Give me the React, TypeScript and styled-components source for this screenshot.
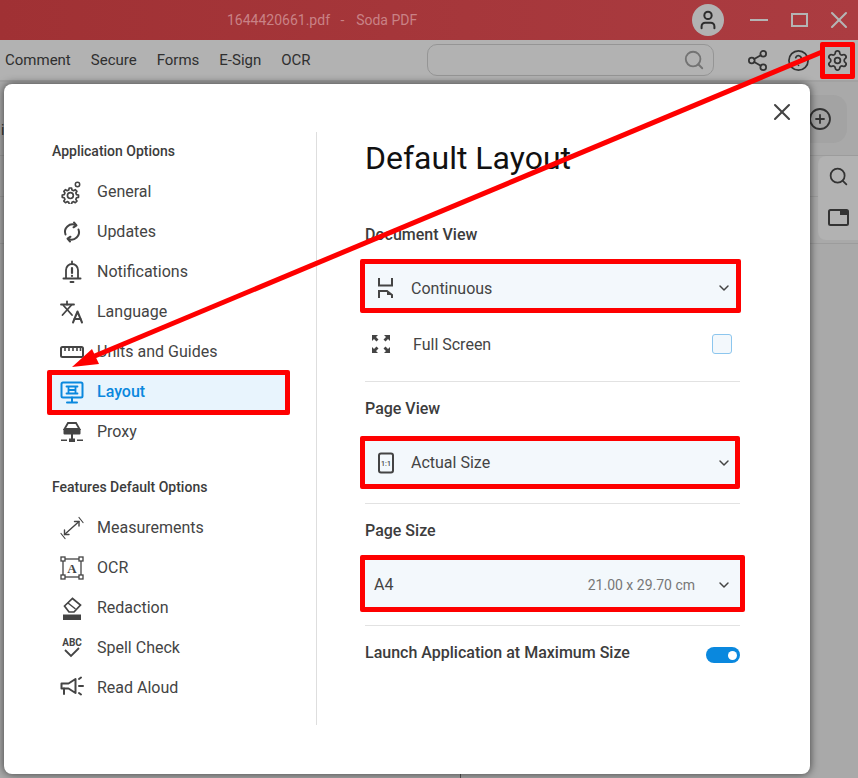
import React from 'react';
import styled, { createGlobalStyle } from 'styled-components';
import { ChevronDown, CircleHelp, CirclePlus, Search, Settings, Share2, User, X } from 'lucide-react';

const GlobalStyle = createGlobalStyle`
  html, body {
    margin: 0;
    padding: 0;
    background: #a9a9a9;
  }
  * {
    box-sizing: border-box;
  }
`;

const Page = styled.div`
  position: relative;
  width: 858px;
  height: 778px;
  overflow: hidden;
  font-family: Roboto, "Liberation Sans", sans-serif;
  color: #3a3a3a;
`;

const TitleBar = styled.header`
  height: 40px;
  display: flex;
  align-items: center;
  padding-left: 227px;
  background: linear-gradient(90deg, #a03134 0%, #ab3c41 100%);
`;

const FileName = styled.span`
  width: 455px;
  flex: none;
  font-size: 14px;
  white-space: pre;
  color: #c98286;
`;

const Avatar = styled.div`
  width: 32px;
  height: 32px;
  flex: none;
  border-radius: 50%;
  background: #b2b2b2;
  display: flex;
  align-items: center;
  justify-content: center;
  margin-left: 10px;
  margin-right: 26px;
  color: #2d2d2d;
`;

const WindowButtons = styled.div`
  display: flex;
  align-items: center;
  gap: 23px;
  color: #b4b4b4;

  svg {
    margin-left: -6px;
  }
`;

const Minimize = styled.span`
  width: 18px;
  height: 2px;
  background: #b4b4b4;
`;

const Maximize = styled.span`
  width: 17px;
  height: 14px;
  border: 2px solid #b4b4b4;
`;

const ToolBar = styled.div`
  height: 42px;
  display: flex;
  align-items: center;
  padding-left: 5px;
  background: #b2b2b2;
  border-bottom: 2px solid #a2a2a2;
`;

const MenuList = styled.nav`
  display: flex;
  flex: none;
  gap: 20px;
  width: 422px;
`;

const MenuItem = styled.span`
  font-size: 15px;
  color: #2f2f2f;
`;

const SearchBox = styled.div`
  width: 287px;
  height: 32px;
  flex: none;
  display: flex;
  align-items: center;
  justify-content: flex-end;
  padding-right: 8px;
  border: 1px solid #959595;
  border-radius: 10px;
  color: #737373;
`;

const ToolIcons = styled.div`
  display: flex;
  align-items: center;
  flex: none;
  margin-left: 23px;
  color: #333;
`;

const ToolIcon = styled.span`
  width: 41px;
  display: flex;
  justify-content: center;
`;

const GearBox = styled.span`
  width: 35px;
  height: 37px;
  margin-left: 1px;
  display: flex;
  align-items: center;
  justify-content: center;
  border: 5px solid #fe0000;
  border-radius: 2px;
  color: #333;
`;

const BackdropLine = styled.div<{ $top: number }>`
  position: absolute;
  left: 0;
  right: 0;
  top: ${p => p.$top}px;
  height: 1px;
  background: #9c9c9c;
`;

const BackdropStub = styled.div`
  position: absolute;
  left: 460px;
  top: 770px;
  width: 1px;
  height: 8px;
  background: #555;
`;

const BackdropLabel = styled.span`
  position: absolute;
  left: 1px;
  top: 122px;
  font-size: 14px;
  color: #333;
`;

const ZoomChip = styled.div`
  position: absolute;
  left: 790px;
  top: 95px;
  width: 57px;
  height: 48px;
  border-radius: 14px;
  background: #a3a3a3;
  display: flex;
  align-items: center;
  justify-content: flex-end;
  padding-right: 15px;
  color: #333;
`;

const SidePanel = styled.div`
  position: absolute;
  left: 818px;
  top: 156px;
  width: 50px;
  height: 84px;
  border-radius: 8px;
  background: #b2b2b2;
  display: flex;
  flex-direction: column;
  align-items: flex-start;
  padding: 10px 0 0 10px;
  gap: 22px;
  color: #333;
`;

const Modal = styled.div`
  position: absolute;
  left: 4px;
  top: 84px;
  width: 806px;
  height: 690px;
  display: flex;
  padding-top: 48px;
  background: #fff;
  border-radius: 8px;
  box-shadow: 0 0 9px rgba(0, 0, 0, 0.65);
`;

const CloseButton = styled.button`
  position: absolute;
  top: 14px;
  right: 14px;
  padding: 0;
  border: 0;
  background: none;
  display: flex;
  color: #444;
`;

const Sidebar = styled.aside`
  width: 313px;
  height: 593px;
  padding-left: 48px;
  border-right: 1px solid #dedede;
`;

const SideHeading = styled.h3<{ $first?: boolean }>`
  margin: ${p => (p.$first ? '9px' : '25px')} 0 11px;
  height: 20px;
  font-size: 14px;
  font-weight: 500;
  line-height: 20px;
  color: #3c3c3c;
`;

const NavRow = styled.div<{ $active?: boolean }>`
  height: 40px;
  display: flex;
  align-items: center;
  gap: 13px;
  padding-left: 8px;
  font-size: 16px;
  color: #444;

  ${p =>
    p.$active &&
    `
    height: 45px;
    width: 243px;
    margin: -2.5px 0 -2.5px -5px;
    padding-left: 8px;
    border: 5px solid #fe0000;
    border-radius: 2px;
    background: #e8f4fd;
    color: #0a88de;
    font-weight: 500;
  `}
`;

const NavIcon = styled.span`
  width: 24px;
  height: 24px;
  display: flex;
  align-items: center;
  justify-content: center;
  flex: none;
`;

const NavLabel = styled.span`
  margin-bottom: 2px;
`;

const Content = styled.main`
  width: 375px;
  margin-left: 48px;
`;

const Title = styled.h1`
  margin: 0;
  height: 52px;
  font-size: 32px;
  font-weight: 400;
  line-height: 52px;
  color: #111;
`;

const SectionLabel = styled.h4<{ $top: number; $bottom: number }>`
  margin: ${p => p.$top}px 0 ${p => p.$bottom}px;
  height: 20px;
  font-size: 16px;
  font-weight: 500;
  line-height: 22px;
  color: #3c3c3c;
`;

const SelectFrame = styled.div<{ $width: number; $height: number; $padRight: number; $padTop?: number }>`
  width: ${p => p.$width}px;
  height: ${p => p.$height}px;
  margin-left: -5px;
  display: flex;
  align-items: center;
  padding: ${p => p.$padTop ?? 0}px ${p => p.$padRight}px 0 9px;
  border: 5px solid #fe0000;
  border-radius: 2px;
  background: #f3f8fc;
  font-size: 16px;
  color: #444;
`;

const SelectIcon = styled.span`
  width: 28px;
  margin-right: 9px;
  padding-left: 4px;
  display: flex;
  align-items: center;
  flex: none;
`;

const SelectText = styled.span`
  flex: 1;
`;

const SelectHint = styled.span`
  margin-right: 21px;
  font-size: 14px;
  color: #777;
`;

const CheckRow = styled.div`
  height: 44px;
  margin-top: 9px;
  display: flex;
  align-items: center;
  padding: 0 8px 0 6px;
  font-size: 16px;
  color: #444;
`;

const CheckLabel = styled.span`
  flex: 1;
  margin-left: 22px;
`;

const Checkbox = styled.span`
  width: 20px;
  height: 20px;
  border: 1px solid #8cc6ee;
  border-radius: 3px;
  background: #f3f8fc;
`;

const Divider = styled.hr<{ $top: number }>`
  margin: ${p => p.$top}px 0 0;
  border: 0;
  border-top: 1px solid #e2e2e2;
`;

const ToggleRow = styled.div`
  margin-top: 17px;
  display: flex;
  justify-content: space-between;
  align-items: flex-start;
  font-size: 16px;
  font-weight: 500;
  line-height: 20px;
  color: #3c3c3c;
`;

const Toggle = styled.span`
  width: 34px;
  height: 16px;
  margin-top: 4px;
  padding-right: 3px;
  display: flex;
  align-items: center;
  justify-content: flex-end;
  border-radius: 8px;
  background: #0a88de;

  &::after {
    content: '';
    width: 9px;
    height: 9px;
    border-radius: 50%;
    background: #fff;
  }
`;

const Overlay = styled.svg`
  position: absolute;
  left: 0;
  top: 0;
  pointer-events: none;
`;

const stroke = {
  fill: 'none',
  stroke: 'currentColor',
  strokeWidth: 1.8,
  strokeLinecap: 'round' as const,
  strokeLinejoin: 'round' as const,
};

const Glyph: React.FC<{ children: React.ReactNode }> = ({ children }) => (
  <svg width={24} height={24} viewBox="0 0 24 24" {...stroke}>
    {children}
  </svg>
);

const GearPath =
  'M10.6 3h2.8l.5 2.4 1.9.8 2-1.3 2 2-1.3 2 .8 1.9 2.4.5v2.8l-2.4.5-.8 1.9 1.3 2-2 2-2-1.3-1.9.8-.5 2.4h-2.8l-.5-2.4-1.9-.8-2 1.3-2-2 1.3-2-.8-1.9-2.4-.5v-2.8l2.4-.5.8-1.9-1.3-2 2-2 2 1.3 1.9-.8z';

const GeneralIcon = () => (
  <Glyph>
    <g transform="translate(0.3 5.5) scale(0.84)" strokeWidth={2}>
      <path d={GearPath} />
      <circle cx="12" cy="12" r="3.5" />
    </g>
    <circle cx="17.5" cy="4.5" r="2.2" strokeWidth={1.5} />
  </Glyph>
);

const UpdatesIcon = () => (
  <Glyph>
    <path d="M5.5 14.5a7.5 7.5 0 0 1 10-9.5" strokeWidth={2} />
    <path d="M18.5 9.5a7.5 7.5 0 0 1-10 9.5" strokeWidth={2} />
    <path d="M14 2.5l2.5 2.8-3 2" strokeWidth={2} />
    <path d="M10 21.5l-2.5-2.8 3-2" strokeWidth={2} />
  </Glyph>
);

const BellIcon = () => (
  <Glyph>
    <path d="M6 18V10a6 6 0 0 1 12 0v8" />
    <path d="M3.5 18.5h17" strokeWidth={2} />
    <path d="M12 1.5v2" />
    <path d="M12 8v5" strokeWidth={2.2} />
    <path d="M12 15.8v.2" strokeWidth={2.2} />
    <path d="M10.5 22h3" />
  </Glyph>
);

const LanguageIcon = () => (
  <Glyph>
    <path d="M1 4.5h13" />
    <path d="M7 1.5v3" />
    <path d="M2.5 15 11.5 5" />
    <path d="M3.5 5.5l8.5 9.5" />
    <path d="M13 22.5l4.5-11 4.5 11" strokeWidth={2} />
    <path d="M14.5 19h6" strokeWidth={2} />
  </Glyph>
);

const RulerIcon = () => (
  <Glyph>
    <rect x="1" y="7" width="22" height="10" rx="1.5" strokeWidth={2} />
    <path d="M5 7v4M9 7v4M13 7v4M17 7v4M20.5 7v4" strokeWidth={1.6} strokeLinecap="butt" />
  </Glyph>
);

const LayoutIcon = () => (
  <Glyph>
    <rect x="1.5" y="2.5" width="21" height="15" rx="1.5" strokeWidth={2} />
    <path d="M6.5 6.5h11M6.5 13.5h11M8.5 6.5v7M15.5 6.5v7M8.5 10h7" />
    <path d="M12 17.5v4.5M7 22.5h10" strokeWidth={2} />
  </Glyph>
);

const ProxyIcon = () => (
  <svg width="24" height="24" viewBox="0 0 24 24">
    <path d="M4.5 9 8 3h8l3.5 6z" fill="none" stroke="currentColor" strokeWidth="1.8" />
    <path d="M3.5 9h17v4.5a1 1 0 0 1-1 1h-15a1 1 0 0 1-1-1z" fill="currentColor" />
    <rect x="11" y="14" width="2" height="5" fill="currentColor" />
    <rect x="9" y="18.5" width="6" height="3.5" fill="currentColor" />
    <rect x="1" y="19.5" width="6" height="1.5" fill="currentColor" />
    <rect x="17" y="19.5" width="6" height="1.5" fill="currentColor" />
  </svg>
);

const MeasureIcon = () => (
  <Glyph>
    <path d="M4.5 18.5 19 5.5" strokeWidth={1.4} />
    <path d="M14.5 5.5H19v4.5M4.5 14v4.5H9" strokeWidth={1.4} />
    <path d="M19 1.5l4 5M1 17.5l4 5" strokeWidth={1.2} />
  </Glyph>
);

const OcrIcon = () => (
  <svg width="24" height="24" viewBox="0 0 24 24">
    <rect x="3" y="3" width="18" height="18" fill="none" stroke="currentColor" strokeWidth="1.3" />
    {[1, 19].map(x =>
      [1, 19].map(y => (
        <rect key={`${x}-${y}`} x={x} y={y} width="4" height="4" fill="#fff" stroke="currentColor" strokeWidth="1.3" />
      )),
    )}
    <text x="12" y="17" textAnchor="middle" fontSize="13" fontWeight="700" fontFamily="Liberation Serif, serif" fill="currentColor">
      A
    </text>
  </svg>
);

const RedactionIcon = () => (
  <svg width="24" height="24" viewBox="0 0 24 24">
    <path d="M4.5 10 12.5 2.5l8 6.5-6.5 7H9z" fill="none" stroke="currentColor" strokeWidth="1.7" />
    <path d="M8 7l7.5 6" fill="none" stroke="currentColor" strokeWidth="1.4" />
    <rect x="3" y="18.5" width="18" height="5.5" fill="currentColor" />
  </svg>
);

const SpellIcon = () => (
  <svg width="24" height="24" viewBox="0 0 24 24">
    <text x="12" y="10" textAnchor="middle" fontSize="10" fontWeight="700" fontFamily="Roboto, sans-serif" fill="currentColor">
      ABC
    </text>
    <path d="M5 14l6 6 8-8" fill="none" stroke="currentColor" strokeWidth="1.8" />
  </svg>
);

const MegaphoneIcon = () => (
  <Glyph>
    <path d="M1.5 7.5h7l7-4.5v14l-7-4.5h-7z" strokeWidth={2} />
    <path d="M4 12.5v5.5" strokeWidth={2} />
    <path d="M19 3l2-1.5M19 10h4M19 17l2 1.5" strokeWidth={2} />
  </Glyph>
);

const ContinuousIcon = () => (
  <svg width="16" height="24" viewBox="0 0 16 24">
    <path d="M1 2v7.5h13V2M1 22v-7h8l5 4v3" fill="none" stroke="currentColor" strokeWidth="2" />
    <path d="M9 15l5 4H9z" fill="currentColor" />
  </svg>
);

const ActualIcon = () => (
  <svg width="16" height="22" viewBox="0 0 16 22">
    <rect x="1" y="1.5" width="14" height="19" rx="2" fill="none" stroke="currentColor" strokeWidth="2" />
    <text x="8" y="13.5" textAnchor="middle" fontSize="7" fontWeight="500" fontFamily="Roboto, sans-serif" fill="currentColor">
      1:1
    </text>
  </svg>
);

const FullScreenIcon = () => (
  <svg width="20" height="20" viewBox="0 0 20 20" fill="currentColor">
    <path d="M1 1h6L5 3l2.5 2.5-2 2L3 5 1 7zM19 1h-6l2 2-2.5 2.5 2 2L17 5l2 2zM1 19h6l-2-2 2.5-2.5-2-2L3 15l-2-2zM19 19h-6l2-2-2.5-2.5 2-2L17 15l2-2z" />
  </svg>
);

const SplitIcon = () => (
  <svg width="21" height="17" viewBox="0 0 21 17">
    <rect x="1" y="1" width="19" height="15" rx="1.5" fill="none" stroke="currentColor" strokeWidth="2" />
    <rect x="12" y="1" width="8" height="5" fill="currentColor" />
  </svg>
);

const mainNav = [
  { label: 'General', icon: <GeneralIcon /> },
  { label: 'Updates', icon: <UpdatesIcon /> },
  { label: 'Notifications', icon: <BellIcon /> },
  { label: 'Language', icon: <LanguageIcon /> },
  { label: 'Units and Guides', icon: <RulerIcon /> },
  { label: 'Layout', icon: <LayoutIcon />, active: true },
  { label: 'Proxy', icon: <ProxyIcon /> },
];

const featureNav = [
  { label: 'Measurements', icon: <MeasureIcon /> },
  { label: 'OCR', icon: <OcrIcon /> },
  { label: 'Redaction', icon: <RedactionIcon /> },
  { label: 'Spell Check', icon: <SpellIcon /> },
  { label: 'Read Aloud', icon: <MegaphoneIcon /> },
];

const menu = ['Comment', 'Secure', 'Forms', 'E-Sign', 'OCR'];

export default function App() {
  return (
    <Page>
      <GlobalStyle />
      <TitleBar>
        <FileName>{'1644420661.pdf   -   \u200aSoda PDF'}</FileName>
        <Avatar>
          <User size={22} strokeWidth={2.2} />
        </Avatar>
        <WindowButtons>
          <Minimize />
          <Maximize />
          <X size={28} strokeWidth={1.8} />
        </WindowButtons>
      </TitleBar>
      <ToolBar>
        <MenuList>
          {menu.map(item => (
            <MenuItem key={item}>{item}</MenuItem>
          ))}
        </MenuList>
        <SearchBox>
          <Search size={22} strokeWidth={2} />
        </SearchBox>
        <ToolIcons>
          <ToolIcon>
            <Share2 size={23} strokeWidth={1.8} />
          </ToolIcon>
          <ToolIcon>
            <CircleHelp size={23} strokeWidth={1.8} />
          </ToolIcon>
          <GearBox>
            <Settings size={23} strokeWidth={1.8} />
          </GearBox>
        </ToolIcons>
      </ToolBar>

      <BackdropLine $top={155} />
      <BackdropLine $top={196} />
      <BackdropLine $top={243} />
      <BackdropLabel>i</BackdropLabel>
      <BackdropStub />
      <ZoomChip>
        <CirclePlus size={24} strokeWidth={1.8} />
      </ZoomChip>
      <SidePanel>
        <Search size={21} strokeWidth={2} />
        <SplitIcon />
      </SidePanel>

      <Modal>
        <CloseButton aria-label="Close">
          <X size={28} strokeWidth={1.8} />
        </CloseButton>
        <Sidebar>
          <SideHeading $first>Application Options</SideHeading>
          {mainNav.map(n => (
            <NavRow key={n.label} $active={n.active}>
              <NavIcon>{n.icon}</NavIcon>
              <NavLabel>{n.label}</NavLabel>
            </NavRow>
          ))}
          <SideHeading>Features Default Options</SideHeading>
          {featureNav.map(n => (
            <NavRow key={n.label}>
              <NavIcon>{n.icon}</NavIcon>
              <NavLabel>{n.label}</NavLabel>
            </NavRow>
          ))}
        </Sidebar>
        <Content>
          <Title>Default Layout</Title>
          <SectionLabel $top={40} $bottom={15}>Document View</SectionLabel>
          <SelectFrame $width={381} $height={54} $padRight={4} $padTop={4}>
            <SelectIcon>
              <ContinuousIcon />
            </SelectIcon>
            <SelectText>Continuous</SelectText>
            <ChevronDown size={16} strokeWidth={2.2} />
          </SelectFrame>
          <CheckRow>
            <FullScreenIcon />
            <CheckLabel>Full Screen</CheckLabel>
            <Checkbox />
          </CheckRow>
          <Divider $top={15} />
          <SectionLabel $top={16} $bottom={18}>Page View</SectionLabel>
          <SelectFrame $width={380} $height={53} $padRight={3}>
            <SelectIcon>
              <ActualIcon />
            </SelectIcon>
            <SelectText>Actual Size</SelectText>
            <ChevronDown size={16} strokeWidth={2.2} />
          </SelectFrame>
          <Divider $top={14} />
          <SectionLabel $top={16} $bottom={15}>Page Size</SectionLabel>
          <SelectFrame $width={385} $height={57} $padRight={8} $padTop={2}>
            <SelectText>A4</SelectText>
            <SelectHint>21.00 x 29.70 cm</SelectHint>
            <ChevronDown size={16} strokeWidth={2.2} />
          </SelectFrame>
          <Divider $top={13} />
          <ToggleRow>
            Launch Application at Maximum Size
            <Toggle />
          </ToggleRow>
        </Content>
      </Modal>

      <Overlay width="858" height="778" viewBox="0 0 858 778">
        <line x1="822" y1="52" x2="90" y2="358" stroke="#fe0000" strokeWidth="5" />
        <polygon points="72,367 92,349 99,364" fill="#fe0000" />
      </Overlay>
    </Page>
  );
}
